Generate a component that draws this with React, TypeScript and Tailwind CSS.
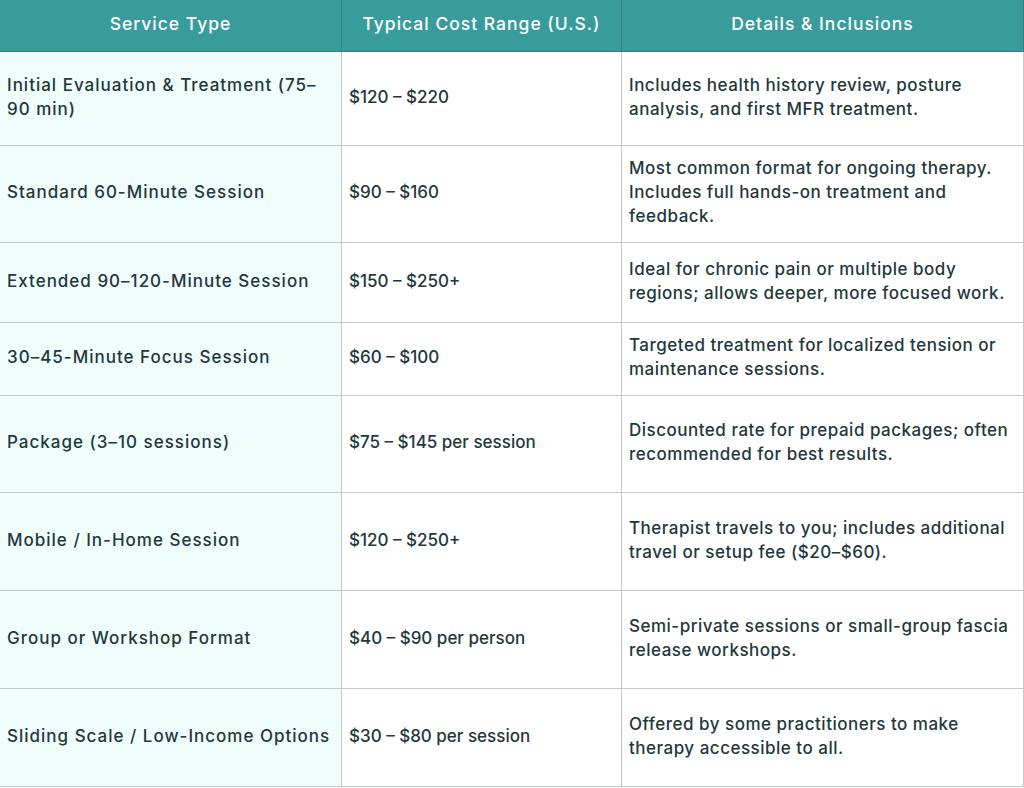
const rows = [
  {
    h: 'h-[94px]',
    service: ['Initial Evaluation & Treatment (75–', '90 min)'],
    cost: '$120 – $220',
    details: ['Includes health history review, posture', 'analysis, and first MFR treatment.'],
  },
  {
    h: 'h-[97px]',
    service: ['Standard 60-Minute Session'],
    cost: '$90 – $160',
    details: ['Most common format for ongoing therapy.', 'Includes full hands-on treatment and', 'feedback.'],
  },
  {
    h: 'h-[80px]',
    service: ['Extended 90–120-Minute Session'],
    cost: '$150 – $250+',
    details: ['Ideal for chronic pain or multiple body', 'regions; allows deeper, more focused work.'],
  },
  {
    h: 'h-[73px]',
    service: ['30–45-Minute Focus Session'],
    cost: '$60 – $100',
    details: ['Targeted treatment for localized tension or', 'maintenance sessions.'],
  },
  {
    h: 'h-[97px]',
    service: ['Package (3–10 sessions)'],
    cost: '$75 – $145 per session',
    details: ['Discounted rate for prepaid packages; often', 'recommended for best results.'],
  },
  {
    h: 'h-[98px]',
    service: ['Mobile / In-Home Session'],
    cost: '$120 – $250+',
    details: ['Therapist travels to you; includes additional', 'travel or setup fee ($20–$60).'],
  },
  {
    h: 'h-[98px]',
    service: ['Group or Workshop Format'],
    cost: '$40 – $90 per person',
    details: ['Semi-private sessions or small-group fascia', 'release workshops.'],
  },
  {
    h: 'h-[98px]',
    service: ['Sliding Scale / Low-Income Options'],
    cost: '$30 – $80 per session',
    details: ['Offered by some practitioners to make', 'therapy accessible to all.'],
  },
];

const cell = 'flex items-center border-r border-b border-[#c4c8c8] px-[7px] pb-[4px] whitespace-nowrap';
const head =
  'h-[52px] flex items-center justify-center bg-[#389c9c] text-white text-[17.5px] tracking-[1px] border-r border-b border-[#2e8282] pb-[3px]';

function Lines({ lines }: { lines: string[] }) {
  return (
    <div>
      {lines.map((l) => (
        <div key={l}>{l}</div>
      ))}
    </div>
  );
}

export default function App() {
  return (
    <div
      className="w-[1024px] h-[788px] overflow-hidden bg-white text-[#22383c] text-[17px] leading-[24px] tracking-[0.5px] font-medium"
      style={{ fontFamily: 'Inter, "Noto Sans", sans-serif' }}
    >
      <div className="grid grid-cols-[342px_280px_402px]">
        <div className={head}>Service Type</div>
        <div className={head}>Typical Cost Range (U.S.)</div>
        <div className={head}>Details &amp; Inclusions</div>
        {rows.map((r) => (
          <div key={r.cost + r.service[0]} className="contents">
            <div className={`${cell} ${r.h} bg-[#effdfb] tracking-[1px]`}>
              <Lines lines={r.service} />
            </div>
            <div className={`${cell} ${r.h} tracking-normal`}>{r.cost}</div>
            <div className={`${cell} ${r.h}`}>
              <Lines lines={r.details} />
            </div>
          </div>
        ))}
      </div>
    </div>
  );
}
